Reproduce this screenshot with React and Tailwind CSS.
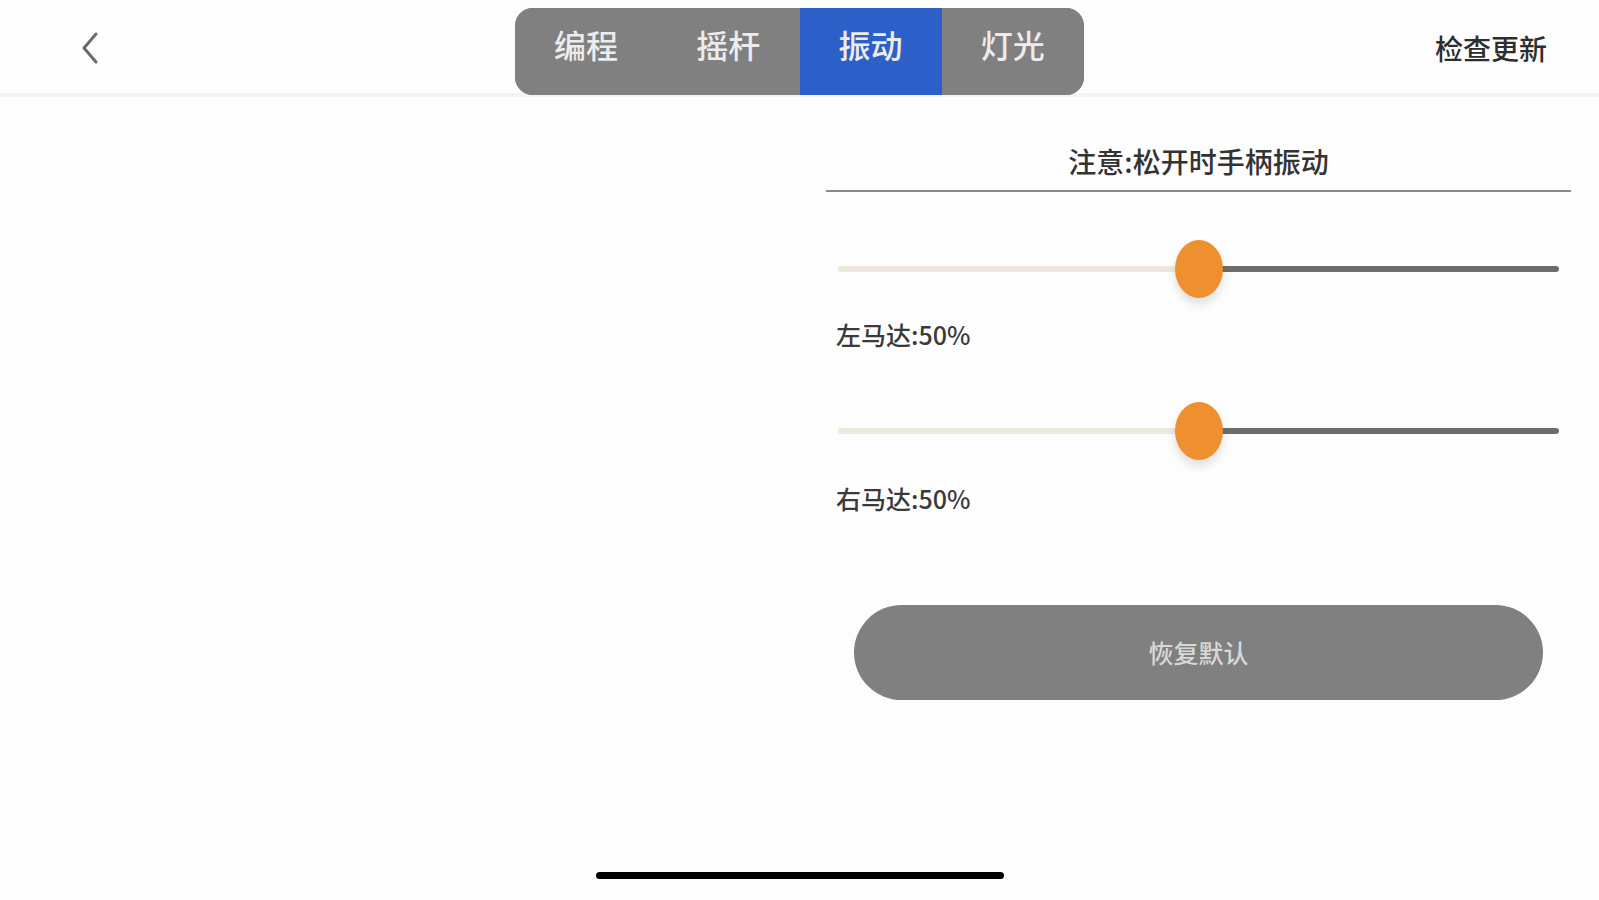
import { useState } from 'react';

const tabs = ['编程', '摇杆', '振动', '灯光'];

function Slider({ value }) {
  return (
    <div className="relative h-[58px] mx-[12px] flex items-center">
      <div className="flex w-full h-[6px] rounded-full overflow-hidden">
        <div className="h-full bg-[#ece8db]" style={{ width: `${value}%` }} />
        <div className="h-full flex-1 bg-[#6c6c6c]" />
      </div>
      {/* thumb */}
      <div
        className="absolute top-0 w-[48px] h-[58px] -ml-[24px] rounded-[50%] bg-[#ef9030] shadow-[0_6px_10px_rgba(0,0,0,0.12)]"
        style={{ left: `${value}%` }}
      />
    </div>
  );
}

export default function App() {
  const [active, setActive] = useState(2);
  const [left] = useState(50);
  const [right] = useState(50);

  return (
    <div
      className="w-[1599px] h-[900px] bg-[#fdfdfd] flex flex-col overflow-hidden"
      style={{ fontFamily: '"Noto Sans CJK SC", "Noto Sans", sans-serif' }}
    >
      {/* Header */}
      <div className="h-[97px] shrink-0 grid grid-cols-[1fr_auto_1fr] items-start border-b-[4px] border-[#f4f4f4]">
        <div className="h-full flex items-center pl-[80px]">
          <svg width="20" height="34" viewBox="0 0 20 34" fill="none">
            <polyline points="16,3 4,17 16,31" stroke="#6b6b6b" strokeWidth="3" strokeLinecap="round" strokeLinejoin="round" />
          </svg>
        </div>

        <div className="mt-[8px] flex h-[87px] w-[569px] rounded-[18px] overflow-hidden bg-[#808080]">
          {tabs.map((t, i) => (
            <button
              key={t}
              onClick={() => setActive(i)}
              className={`flex-1 flex items-center justify-center pb-[16px] text-[32px] font-medium text-[#ececec] ${
                i === active ? 'bg-[#2c60c8]' : 'bg-[#808080]'
              }`}
            >
              {t}
            </button>
          ))}
        </div>

        <div className="h-full flex items-center justify-end pr-[52px]">
          <span className="text-[28px] font-medium text-[#2e2e2e]">检查更新</span>
        </div>
      </div>

      {/* Body */}
      <div className="flex-1 flex">
        <div className="flex-1" />
        <div className="w-[745px] mr-[28px] flex flex-col">
          <div className="pt-[47px] pb-[12px] border-b-2 border-[#8a8a8a] text-center">
            <span className="text-[28px] leading-[34px] font-medium text-[#333]">注意:松开时手柄振动</span>
          </div>

          <div className="mt-[48px]">
            <Slider value={left} />
          </div>
          <div className="mt-[20px] pl-[10px] text-[25px] leading-[32px] font-medium text-[#3a3a3a]">
            左马达:{left}%
          </div>

          <div className="mt-[52px]">
            <Slider value={right} />
          </div>
          <div className="mt-[22px] pl-[10px] text-[25px] leading-[32px] font-medium text-[#3a3a3a]">
            右马达:{right}%
          </div>

          <button className="mt-[91px] mx-[28px] h-[95px] rounded-full bg-[#808080] text-[25px] font-medium text-[#d8d8d8]">
            恢复默认
          </button>
        </div>
      </div>

      {/* Home indicator */}
      <div className="shrink-0 flex justify-center pb-[21px]">
        <div className="w-[408px] h-[7px] rounded-full bg-black" />
      </div>
    </div>
  );
}
